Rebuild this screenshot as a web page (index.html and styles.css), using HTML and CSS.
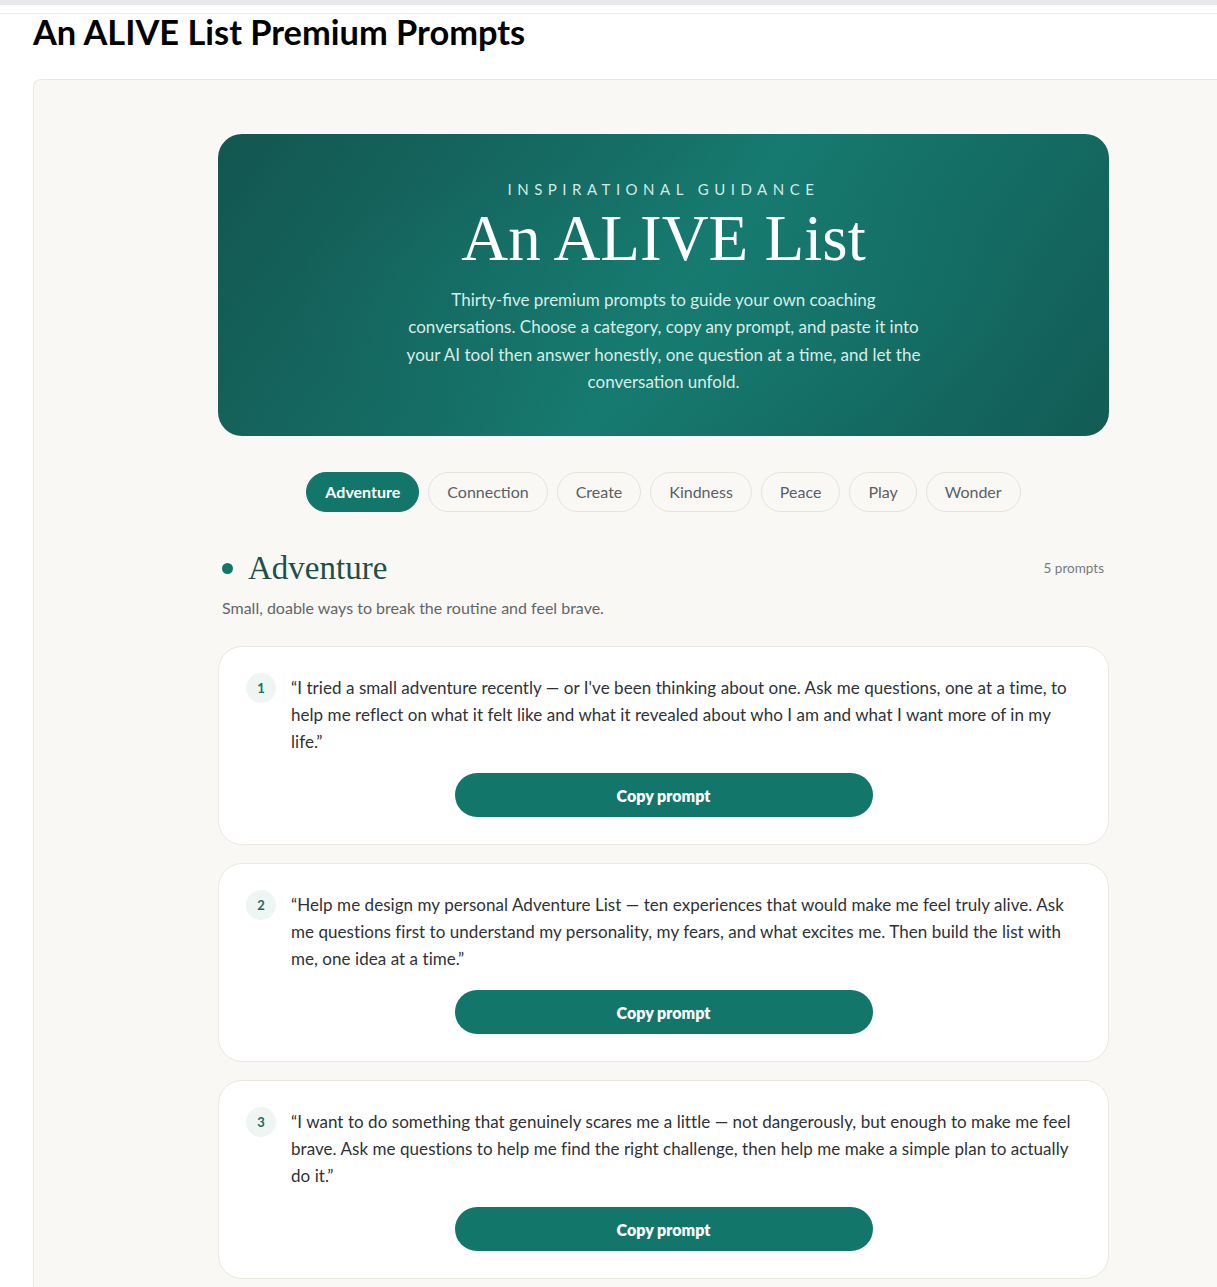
FILE: index.html
```html
<!DOCTYPE html>
<html lang="en">
<head>
<meta charset="utf-8">
<title>An ALIVE List Premium Prompts</title>
<link rel="stylesheet" href="styles.css">
</head>
<body>
<div class="topbar"></div>
<div class="topline"></div>
<h1 class="page-title">An ALIVE List Premium Prompts</h1>
<div class="frame">
  <div class="column">
    <header class="hero">
      <p class="eyebrow">Inspirational Guidance</p>
      <h2 class="hero-title">An ALIVE List</h2>
      <p class="hero-text">Thirty-five premium prompts to guide your own coaching conversations. Choose a category, copy any prompt, and paste it into your AI tool then answer honestly, one question at a time, and let the conversation unfold.</p>
    </header>

    <nav class="tabs">
      <button class="tab active">Adventure</button>
      <button class="tab">Connection</button>
      <button class="tab">Create</button>
      <button class="tab">Kindness</button>
      <button class="tab">Peace</button>
      <button class="tab">Play</button>
      <button class="tab">Wonder</button>
    </nav>

    <section class="category">
      <div class="cat-head">
        <h3 class="cat-title"><span class="dot"></span>Adventure</h3>
        <span class="cat-count">5 prompts</span>
      </div>
      <p class="cat-desc">Small, doable ways to break the routine and feel brave.</p>

      <div class="cards">
        <article class="card">
          <div class="card-row">
            <span class="num">1</span>
            <p class="prompt">“I tried a small adventure recently — or I've been thinking about one. Ask me questions, one at a time, to help me reflect on what it felt like and what it revealed about who I am and what I want more of in my life.”</p>
          </div>
          <button class="copy">Copy prompt</button>
        </article>
        <article class="card">
          <div class="card-row">
            <span class="num">2</span>
            <p class="prompt">“Help me design my personal Adventure List — ten experiences that would make me feel truly alive. Ask me questions first to understand my personality, my fears, and what excites me. Then build the list with me, one idea at a time.”</p>
          </div>
          <button class="copy">Copy prompt</button>
        </article>
        <article class="card">
          <div class="card-row">
            <span class="num">3</span>
            <p class="prompt">“I want to do something that genuinely scares me a little — not dangerously, but enough to make me feel brave. Ask me questions to help me find the right challenge, then help me make a simple plan to actually do it.”</p>
          </div>
          <button class="copy">Copy prompt</button>
        </article>
      </div>
    </section>
  </div>
</div>
</body>
</html>
```
FILE: styles.css
```css
body {
  margin: 0;
  background: #ffffff;
  font-family: "Lato", "Liberation Sans", sans-serif;
  color: #2e3238;
}
.topbar {
  height: 5px;
  background: #e9e7ec;
}
.topline {
  height: 1px;
  margin-top: 8px;
  background: #f1e7f1;
}
.page-title {
  margin: 0 0 29px 0;
  padding-left: 33px;
  font-family: "Lato", "Liberation Sans", sans-serif;
  font-weight: 700;
  font-size: 34.4px;
  line-height: 36px;
  color: #000;
}
.frame {
  margin-left: 33px;
  background: #f9f8f5;
  border: 1px solid #ebe8e2;
  border-right: 0;
  border-radius: 8px 0 0 0;
  padding: 54px 0 40px 76px;
}
.column {
  width: 891px;
  margin: 0 auto;
}
.hero {
  box-sizing: border-box;
  height: 302px;
  border-radius: 24px;
  padding: 45px 40px 0;
  text-align: center;
  background:
    radial-gradient(ellipse 60% 70% at 50% 55%, rgba(22,124,113,0.45), rgba(22,124,113,0) 70%),
    linear-gradient(125deg, #135650 0%, #156e65 38%, #167a70 52%, #146d64 72%, #125c55 100%);
  color: #fff;
}
.eyebrow {
  margin: 0;
  font-size: 15px;
  line-height: 20px;
  letter-spacing: 5.5px;
  text-transform: uppercase;
  color: #d3e9e3;
}
.hero-title {
  margin: 4px 0 0;
  font-family: "Liberation Serif", "DejaVu Serif", serif;
  font-weight: 400;
  font-size: 65px;
  line-height: 70px;
  color: #ffffff;
}
.hero-text {
  margin: 13px auto 0;
  max-width: 530px;
  font-size: 17px;
  line-height: 27.3px;
  color: #d9ece6;
}
.tabs {
  display: flex;
  justify-content: center;
  gap: 9px;
  margin-top: 36px;
}
.tab {
  height: 40px;
  padding: 0 18px 1px;
  border: 1px solid #e6e3dd;
  border-radius: 20px;
  background: transparent;
  font-family: "Lato", "Liberation Sans", sans-serif;
  font-size: 16px;
  color: #5b6068;
  cursor: pointer;
}
.tab.active {
  background: #13766b;
  border-color: #13766b;
  color: #fff;
  font-weight: 700;
}
.category {
  margin-top: 36px;
}
.cat-head {
  display: flex;
  align-items: center;
  justify-content: space-between;
  padding: 0 5px 0 4px;
  height: 40px;
}
.cat-title {
  display: flex;
  align-items: center;
  gap: 15px;
  margin: 0;
  font-family: "Liberation Serif", "DejaVu Serif", serif;
  font-weight: 400;
  font-size: 33px;
  line-height: 40px;
  color: #1e4f49;
}
.dot {
  width: 11px;
  height: 11px;
  border-radius: 50%;
  background: #13766b;
}
.cat-count {
  font-size: 13.5px;
  color: #777b80;
}
.cat-desc {
  margin: 10px 0 0;
  padding-left: 4px;
  font-size: 16px;
  line-height: 20px;
  color: #62666b;
}
.cards {
  display: flex;
  flex-direction: column;
  gap: 18px;
  margin-top: 28px;
}
.card {
  display: flex;
  flex-direction: column;
  align-items: center;
  gap: 18px;
  padding: 27px;
  background: #ffffff;
  border: 1px solid #ebe8e2;
  border-radius: 24px;
}
.card-row {
  display: flex;
  align-items: flex-start;
  gap: 15px;
  width: 100%;
}
.num {
  flex: none;
  display: flex;
  align-items: center;
  justify-content: center;
  width: 30px;
  height: 30px;
  margin-top: -1px;
  border-radius: 50%;
  background: #eef5f2;
  color: #1d6b61;
  font-size: 13px;
  font-weight: 700;
}
.prompt {
  margin: 0;
  font-size: 17px;
  letter-spacing: 0.05px;
  line-height: 27px;
  color: #2e3238;
}
.copy {
  width: 418px;
  height: 44px;
  padding-bottom: 1px;
  border: none;
  border-radius: 22px;
  background: #13766b;
  color: #fff;
  font-family: "Lato", "Liberation Sans", sans-serif;
  font-size: 16px;
  font-weight: 800;
  cursor: pointer;
}
```
